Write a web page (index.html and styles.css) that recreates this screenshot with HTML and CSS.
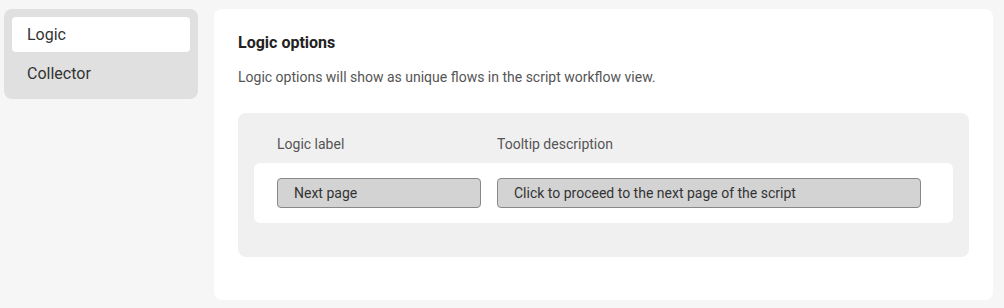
FILE: index.html
```html
<!DOCTYPE html>
<html lang="en">
<head>
    <meta charset="UTF-8">
    <title>Logic options</title>
    <link rel="stylesheet" href="styles.css">
</head>
<body>
    <div class="page">
        <!-- 左侧菜单 -->
        <ul class="sideMenu">
            <li class="current">Logic</li>
            <li>Collector</li>
        </ul>
        <!-- 右侧内容 -->
        <div class="mainPanel">
            <h2 class="title">Logic options</h2>
            <p class="desc">Logic options will show as unique flows in the script workflow view.</p>
            <div class="optionBox">
                <div class="optionHead">
                    <span class="colLabel">Logic label</span>
                    <span class="colTip">Tooltip description</span>
                </div>
                <div class="optionRow">
                    <input type="text" class="inLabel" value="Next page">
                    <input type="text" class="inTip" value="Click to proceed to the next page of the script">
                </div>
            </div>
        </div>
    </div>
</body>
</html>
```
FILE: styles.css
```css
body,ul,li,h2,p{
    padding: 0;
    margin: 0;
}
body{
    background: #f6f6f6;
    font-family: Roboto, "Liberation Sans", sans-serif;
    color: #333;
}
.page{
    display: flex;
    align-items: flex-start;
    gap: 16px;
    padding: 9px 11px 8px 4px;
}
.sideMenu{
    width: 194px;
    box-sizing: border-box;
    background: #e0e0e0;
    border-radius: 8px;
    padding: 8px 8px 8px 8px;
}
.sideMenu li{
    list-style: none;
    height: 35px;
    line-height: 35px;
    padding-left: 15px;
    font-size: 16px;
    color: #333;
    border-radius: 4px;
    margin-bottom: 4px;
}
.sideMenu li:last-child{
    margin-bottom: 0;
}
.sideMenu .current{
    background: #fff;
}
.mainPanel{
    flex: 1;
    height: 291px;
    box-sizing: border-box;
    background: #fff;
    border-radius: 8px;
    padding: 24px 24px;
}
.title{
    font-size: 16px;
    font-weight: bold;
    color: #222;
    line-height: 20px;
}
.desc{
    margin-top: 14px;
    font-size: 14px;
    line-height: 20px;
    color: #555;
}
.optionBox{
    margin-top: 26px;
    background: #f0f0f0;
    border-radius: 8px;
    padding: 20px 16px 34px 16px;
}
.optionHead{
    display: flex;
    padding-left: 23px;
    font-size: 14px;
    line-height: 22px;
    color: #555;
    margin-bottom: 8px;
}
.colLabel{
    width: 220px;
}
.optionRow{
    display: flex;
    gap: 16px;
    background: #fff;
    border-radius: 6px;
    padding: 15px 32px 15px 23px;
}
.optionRow input{
    height: 30px;
    box-sizing: border-box;
    background: #d3d3d3;
    border: 1px solid #888;
    border-radius: 4px;
    padding: 0 16px;
    font-family: Roboto, "Liberation Sans", sans-serif;
    font-size: 14px;
    color: #333;
    outline: none;
}
.inLabel{
    width: 204px;
}
.inTip{
    width: 424px;
}
```
